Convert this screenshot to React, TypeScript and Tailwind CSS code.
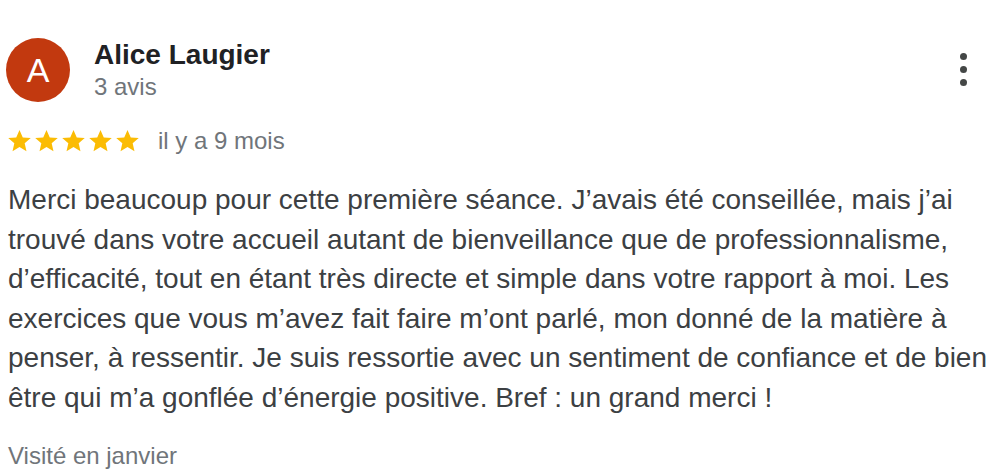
import { useState } from "react";

type Review = {
  author: string;
  initial: string;
  reviewCount: string;
  rating: number;
  when: string;
  text: string;
  visited: string;
};

const review: Review = {
  author: "Alice Laugier",
  initial: "A",
  reviewCount: "3 avis",
  rating: 5,
  when: "il y a 9 mois",
  text: "Merci beaucoup pour cette première séance. J’avais été conseillée, mais j’ai trouvé dans votre accueil autant de bienveillance que de professionnalisme, d’efficacité, tout en étant très directe et simple dans votre rapport à moi. Les exercices que vous m’avez fait faire m’ont parlé, mon donné de la matière à penser, à ressentir. Je suis ressortie avec un sentiment de confiance et de bien être qui m’a gonflée d’énergie positive. Bref : un grand merci !",
  visited: "Visité en janvier",
};

function Star() {
  return (
    <svg viewBox="0 0 24 24" className="h-[28px] w-[27px] fill-[#fbbc04]">
      <path d="M12 2.2l2.9 6.6 7.1.6-5.4 4.7 1.6 7-6.2-3.7-6.2 3.7 1.6-7L2 9.4l7.1-.6z" />
    </svg>
  );
}

export default function App() {
  const [menuOpen, setMenuOpen] = useState(false);

  return (
    <div
      className="h-[474px] w-[992px] bg-white pl-[6px] pt-[38px]"
      style={{ fontFamily: '"Liberation Sans", Arial, sans-serif' }}
    >
      <div className="flex items-start pr-[8px]">
        <div className="flex h-[64px] w-[64px] shrink-0 items-center justify-center rounded-full bg-[#c2390f] text-[34px] text-white">
          {review.initial}
        </div>
        <div className="ml-[24px] flex-1">
          <p className="mt-[1px] text-[28px] font-bold leading-[32px] text-[#202124]">
            {review.author}
          </p>
          <p className="mt-[1px] text-[24px] leading-[30px] text-[#70757a]">
            {review.reviewCount}
          </p>
        </div>
        <button
          type="button"
          onClick={() => setMenuOpen(!menuOpen)}
          className="mr-[17px] mt-[15px] flex flex-col items-center gap-[6px] p-0"
          aria-label="Plus d'options"
        >
          <span className="h-[7px] w-[7px] rounded-full bg-[#444746]" />
          <span className="h-[7px] w-[7px] rounded-full bg-[#444746]" />
          <span className="h-[7px] w-[7px] rounded-full bg-[#444746]" />
        </button>
      </div>

      <div className="mt-[25px] flex items-center">
        <div className="flex">
          {Array.from({ length: review.rating }).map((_, i) => (
            <Star key={i} />
          ))}
        </div>
        <span className="ml-[17px] text-[24px] leading-[28px] text-[#70757a]">
          {review.when}
        </span>
      </div>

      <p className="mt-[25px] pl-[2px] text-[28px] leading-[39.5px] text-[#3c4043]">
        {review.text}
      </p>

      <p className="mt-[25px] pl-[2px] text-[24px] leading-[28px] text-[#70757a]">
        {review.visited}
      </p>
    </div>
  );
}
